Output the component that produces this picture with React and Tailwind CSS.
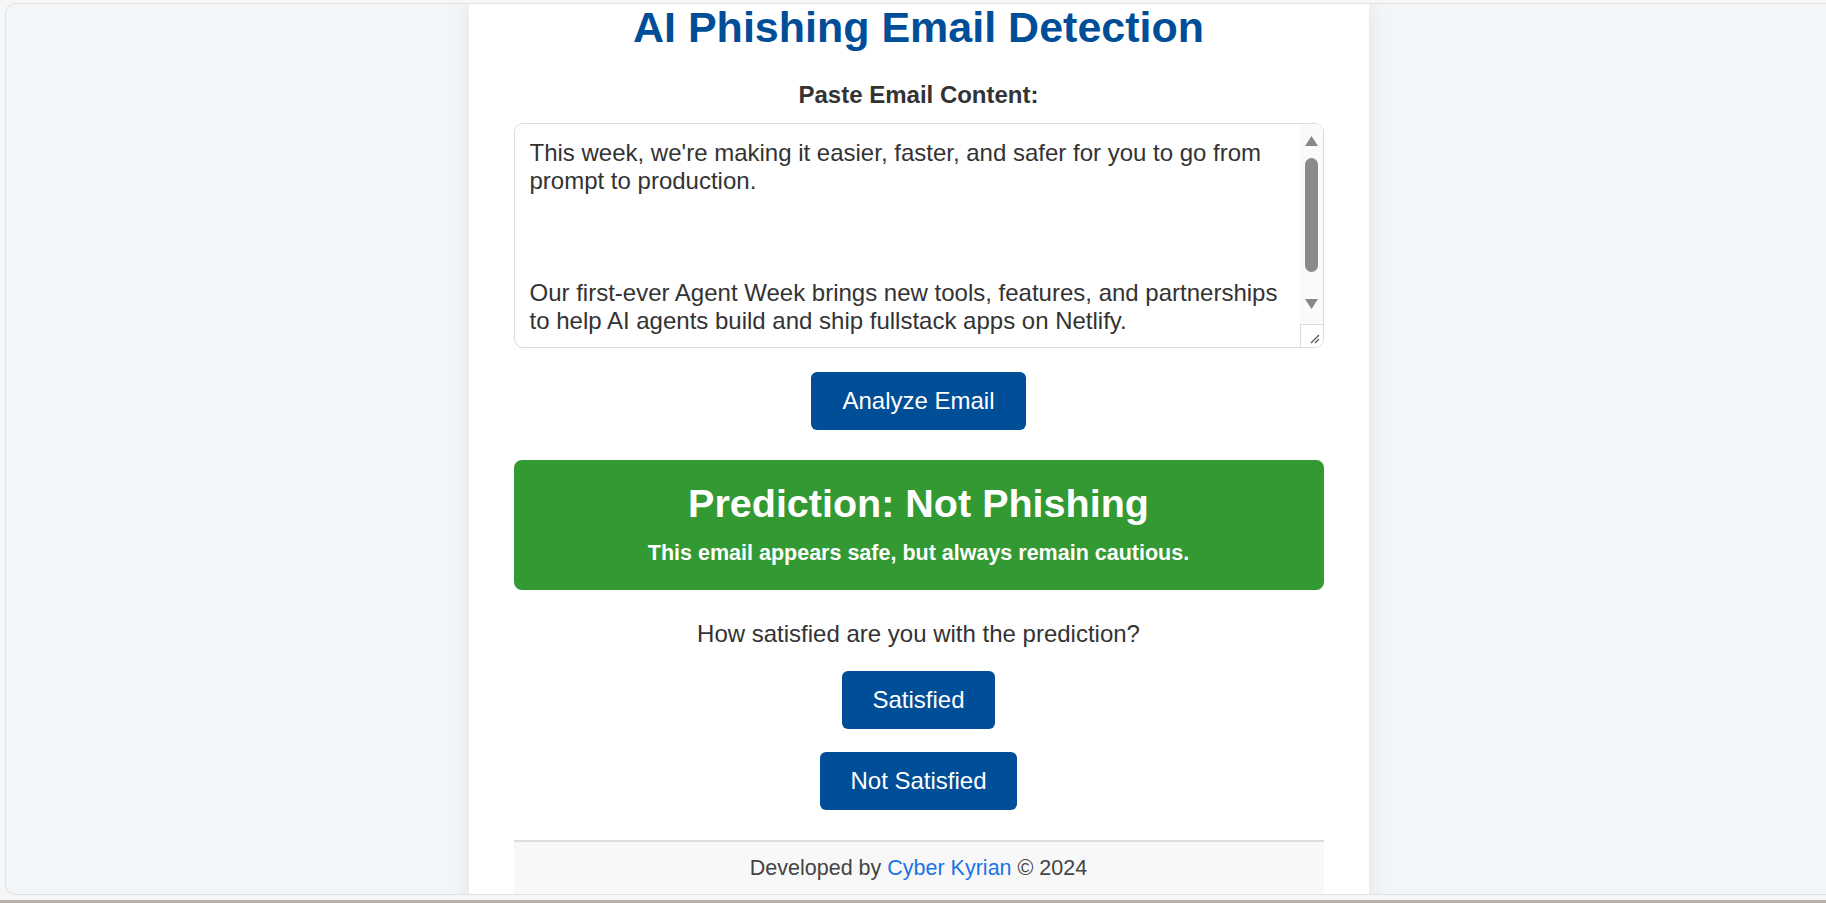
import React from 'react';

const emailLines = [
  "This week, we're making it easier, faster, and safer for you to go from",
  'prompt to production.',
  '',
  '',
  '',
  'Our first-ever Agent Week brings new tools, features, and partnerships',
  'to help AI agents build and ship fullstack apps on Netlify.',
];

// fake classic scrollbar + resize grip drawn over the textarea box
const ScrollBar = () => (
  <div className="absolute top-0 right-0 bottom-0 w-[23px] flex flex-col bg-[#fafafa]">
    <div className="h-[200px] flex flex-col items-center">
      <svg width="13" height="10" viewBox="0 0 13 10" className="mt-[12px]">
        <path d="M6.5 0 L13 10 L0 10 Z" fill="#888" />
      </svg>
      <div className="mt-[12px] w-[13px] h-[114px] rounded-full bg-[#8a8a8a]" />
      <svg width="13" height="10" viewBox="0 0 13 10" className="mt-[27px]">
        <path d="M0 0 L13 0 L6.5 10 Z" fill="#888" />
      </svg>
    </div>
    <div className="flex-1 border-t border-l border-[#dcdcdc] bg-white flex items-end justify-end pr-[3px] pb-[3px]">
      <svg width="10" height="10" viewBox="0 0 10 10">
        <path d="M1 9 L9 1 M5 9 L9 5" stroke="#555" strokeWidth="1.2" />
      </svg>
    </div>
  </div>
);

const BlueButton = ({ children, className = '' }) => (
  <button
    className={`bg-[#004e98] text-white text-[24px] leading-[28px] py-[15px] rounded-[6px] ${className}`}
  >
    {children}
  </button>
);

export default function App() {
  return (
    <div className="h-[903px] flex flex-col bg-[#f6f6f6] overflow-hidden font-['Liberation_Sans',Arial,sans-serif]">
      <div className="flex-1 min-h-0 mt-[3px] ml-[5px] mb-[5px] rounded-l-[10px] border border-r-0 border-[#e2e2e2] bg-[#f3f6f9] overflow-hidden pl-[5px]">
        <div className="w-[900px] mx-auto bg-white px-[45px] pb-[40px] shadow-[0_0_20px_rgba(0,0,0,0.08)] text-[#333]">
          <h1 className="text-center text-[43px] leading-[46px] font-bold text-[#004e98]">
            AI Phishing Email Detection
          </h1>

          <div className="mt-[31px] text-center text-[24px] leading-[28px] font-bold text-[#333]">
            Paste Email Content:
          </div>

          <div className="relative mt-[14px] h-[225px] rounded-[9px] border border-[#dddddd] overflow-hidden">
            <div className="pt-[15px] pl-[15px] text-[24px] leading-[28px] text-[#333]">
              {emailLines.map((line, i) => (
                <div key={i} className="whitespace-nowrap h-[28px]">
                  {line}
                </div>
              ))}
            </div>
            <ScrollBar />
          </div>

          <div className="mt-[24px] flex justify-center">
            <BlueButton className="px-[31px]">Analyze Email</BlueButton>
          </div>

          <div className="mt-[30px] rounded-[8px] bg-[#339933] text-white text-center pt-[20px] pb-[24px]">
            <h2 className="text-[39.5px] leading-[46px] font-bold">Prediction: Not Phishing</h2>
            <p className="mt-[15px] text-[21.5px] leading-[25px] font-bold">
              This email appears safe, but always remain cautious.
            </p>
          </div>

          <p className="mt-[30px] text-center text-[24px] leading-[28px] text-[#333]">
            How satisfied are you with the prediction?
          </p>

          <div className="mt-[23px] flex flex-col items-center gap-[23px]">
            <BlueButton className="px-[30px]">Satisfied</BlueButton>
            <BlueButton className="px-[30px]">Not Satisfied</BlueButton>
          </div>

          <footer className="mt-[30px] border-t-2 border-[#dedede] bg-[#f8f8f8] pt-[14px] pb-[16px] text-center text-[21.5px] leading-[25px] text-[#444]">
            Developed by <a className="text-[#1a73e8]">Cyber Kyrian</a> © 2024
          </footer>
        </div>
      </div>
      <div className="h-[3px] bg-[#b4afa8]" />
    </div>
  );
}
